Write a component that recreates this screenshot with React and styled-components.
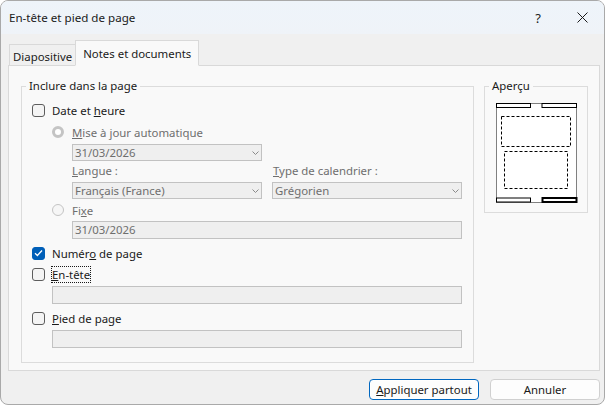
import styled, { createGlobalStyle } from 'styled-components'

const Global = createGlobalStyle`
  html, body {
    margin: 0;
    padding: 0;
    background: #ffffff;
    font-family: 'Noto Sans', 'Liberation Sans', sans-serif;
    font-size: 11.4px;
    color: #1a1a1a;
  }
`

const Window = styled.div`
  width: 605px;
  height: 405px;
  box-sizing: border-box;
  border: 1px solid #a9a9a9;
  border-radius: 8px;
  overflow: hidden;
  background: #f0f0f0;
  display: flex;
  flex-direction: column;
`

const TitleBar = styled.div`
  height: 33px;
  flex: none;
  display: flex;
  align-items: center;
  padding-left: 8px;
  background: linear-gradient(#eef4fa, #eff3f8);
`

const Title = styled.div`
  flex: 1;
  font-size: 11.6px;
  color: #1a1a1a;
`

const TitleButton = styled.div`
  width: 44px;
  height: 33px;
  display: flex;
  align-items: center;
  justify-content: center;
  color: #222;
  font-size: 13px;
`

const Body = styled.div`
  flex: 1;
  display: flex;
  flex-direction: column;
  padding: 6px 3px 0 7px;
`

const TabStrip = styled.div`
  display: flex;
  align-items: flex-end;
  height: 26px;
  position: relative;
  z-index: 1;
  margin-bottom: -1px;
`

const Tab = styled.div`
  box-sizing: border-box;
  position: relative;
  z-index: ${(p) => (p.active ? 1 : 0)};
  height: ${(p) => (p.active ? '26px' : '22px')};
  padding: 0 ${(p) => (p.active ? '7px' : '3px')};
  margin-left: ${(p) => (p.active ? '-1px' : '1px')};
  display: flex;
  align-items: center;
  border: 1px solid #d9d9d9;
  border-bottom: ${(p) => (p.active ? '1px solid #f9f9f9' : '1px solid #d9d9d9')};
  background: ${(p) => (p.active ? '#f9f9f9' : '#f0f0f0')};
  padding-top: ${(p) => (p.active ? '0' : '2px')};
  color: #1a1a1a;
`

const Panel = styled.div`
  height: 306px;
  width: 592px;
  box-sizing: border-box;
  border: 1px solid #d9d9d9;
  background: #f9f9f9;
  display: flex;
  gap: 10px;
  padding: 20px 11px 0 12px;
`

const Group = styled.div`
  position: relative;
  box-sizing: border-box;
  width: ${(p) => p.w}px;
  height: ${(p) => p.h}px;
  border: 1px solid #dcdcdc;
  padding: ${(p) => p.pad};
  display: flex;
  flex-direction: column;
`

const Legend = styled.span`
  position: absolute;
  top: -9px;
  left: 4px;
  padding: 0 3px;
  background: #f9f9f9;
  line-height: 16px;
  color: #1a1a1a;
`

const Row = styled.div`
  display: flex;
  align-items: center;
  height: 20px;
  margin-top: ${(p) => p.mt || 0}px;
  margin-left: ${(p) => p.ml || 0}px;
  gap: 7px;
`

const Box = styled.span`
  width: 13px;
  height: 13px;
  box-sizing: border-box;
  border-radius: 3px;
  border: 1px solid ${(p) => (p.checked ? '#005fb8' : '#5d5d5d')};
  background: ${(p) => (p.checked ? '#005fb8' : '#f4f4f4')};
  display: flex;
  align-items: center;
  justify-content: center;
  flex: none;
`

const Radio = styled.span`
  width: 12px;
  height: 12px;
  box-sizing: border-box;
  border-radius: 50%;
  flex: none;
  margin-right: 1px;
  border: ${(p) => (p.checked ? '3px solid #c4c4c4' : '1px solid #c4c4c4')};
  background: ${(p) => (p.checked ? '#ffffff' : '#f6f6f6')};
`

const Label = styled.span`
  color: ${(p) => (p.disabled ? '#6e6e6e' : '#1a1a1a')};
  line-height: 15px;
  outline: ${(p) => (p.focus ? '1px dotted #1a1a1a' : 'none')};
  outline-offset: 0;
`

const Field = styled.div`
  box-sizing: border-box;
  width: ${(p) => p.w}px;
  height: ${(p) => p.h || 18}px;
  margin-top: ${(p) => p.mt || 0}px;
  margin-left: ${(p) => p.ml || 0}px;
  border: 1px solid #c2c2c2;
  background: #efefef;
  color: #6e6e6e;
  display: flex;
  align-items: center;
  padding: 0 1px 0 2px;
`

const FieldText = styled.span`
  flex: 1;
  line-height: 14px;
`

const Columns = styled.div`
  display: flex;
  gap: 10px;
  margin-top: 3px;
  margin-left: 40px;
`

const Column = styled.div`
  display: flex;
  flex-direction: column;
  width: 190px;
`

const SmallLabel = styled.span`
  height: 14px;
  line-height: 14px;
  color: #6e6e6e;
  padding-left: ${(p) => p.pl || 0}px;
  margin-bottom: 4px;
`

const Footer = styled.div`
  display: flex;
  justify-content: flex-end;
  gap: 11px;
  padding: 8px 1px 0 0;
`

const Button = styled.div`
  box-sizing: border-box;
  width: 110px;
  height: 21px;
  border-radius: 4px;
  display: flex;
  align-items: center;
  justify-content: center;
  background: #fdfdfd;
  border: 1px solid ${(p) => (p.primary ? '#0067c0' : '#d0d0d0')};
  box-shadow: ${(p) => (p.primary ? 'inset 0 0 0 1px #ffffff' : 'none')};
  color: #1a1a1a;
`

const Chevron = () => (
  <svg width="9" height="6" viewBox="0 0 9 6">
    <path d="M1.5 1.5 L4.5 4.5 L7.5 1.5" fill="none" stroke="#8a8a8a" strokeWidth="1" />
  </svg>
)

const Check = () => (
  <svg width="9" height="8" viewBox="0 0 9 8">
    <path d="M1 4.2 L3.4 6.5 L8 1.5" fill="none" stroke="#ffffff" strokeWidth="1.3" />
  </svg>
)

const Select = ({ w, mt, ml, children }) => (
  <Field w={w} h={17} mt={mt} ml={ml}>
    <FieldText>{children}</FieldText>
    <Chevron />
  </Field>
)

const Preview = () => (
  <svg width="82" height="101" viewBox="0 0 82 101" style={{ display: 'block' }}>
    <rect x="0.5" y="0.5" width="80" height="99" fill="#ffffff" stroke="#808080" />
    <rect x="0.5" y="0.5" width="34" height="4" fill="#ffffff" stroke="#000" />
    <rect x="46" y="0.5" width="34.5" height="4" fill="#ffffff" stroke="#000" />
    <rect x="5.5" y="13.5" width="69" height="30" fill="none" stroke="#000" strokeDasharray="3 2" />
    <rect x="8.5" y="48.5" width="63" height="37" fill="none" stroke="#000" strokeDasharray="3 2" />
    <rect x="0.5" y="95" width="34" height="4" fill="#ffffff" stroke="#000" />
    <rect x="46.5" y="95" width="34" height="4" fill="#ffffff" stroke="#000" strokeWidth="2" />
  </svg>
)

const PreviewBox = styled.div`
  margin: 16px 0 0 11px;
`

export default function App() {
  return (
    <>
      <Global />
      <Window>
        <TitleBar>
          <Title>En-tête et pied de page</Title>
          <TitleButton>?</TitleButton>
          <TitleButton>
            <svg width="11" height="11" viewBox="0 0 11 11">
              <path d="M0.5 0.5 L10.5 10.5 M10.5 0.5 L0.5 10.5" stroke="#1a1a1a" strokeWidth="1" />
            </svg>
          </TitleButton>
        </TitleBar>
        <Body>
          <TabStrip>
            <Tab>Diapositive</Tab>
            <Tab active>Notes et documents</Tab>
          </TabStrip>
          <Panel>
            <Group w={453} h={277} pad="13px 10px 0 10px">
              <Legend>Inclure dans la page</Legend>
              <Row>
                <Box />
                <Label>Date et <u>h</u>eure</Label>
              </Row>
              <Row mt={2} ml={20}>
                <Radio checked />
                <Label disabled><u>M</u>ise à jour automatique</Label>
              </Row>
              <Select w={190} mt={2} ml={40}>31/03/2026</Select>
              <Columns>
                <Column>
                  <SmallLabel><u>L</u>angue :</SmallLabel>
                  <Select w={190}>Français (France)</Select>
                </Column>
                <Column>
                  <SmallLabel pl={1}><u>T</u>ype de calendrier :</SmallLabel>
                  <Select w={190}>Grégorien</Select>
                </Column>
              </Columns>
              <Row mt={1} ml={20}>
                <Radio />
                <Label disabled>Fi<u>x</u>e</Label>
              </Row>
              <Field w={390} mt={1} ml={40}>
                <FieldText>31/03/2026</FieldText>
              </Field>
              <Row mt={4}>
                <Box checked>
                  <Check />
                </Box>
                <Label>Numér<u>o</u> de page</Label>
              </Row>
              <Row mt={1}>
                <Box />
                <Label focus><u>E</u>n-tête</Label>
              </Row>
              <Field w={410} mt={2} ml={20} />
              <Row mt={4}>
                <Box />
                <Label><u>P</u>ied de page</Label>
              </Row>
              <Field w={410} mt={2} ml={20} />
            </Group>
            <Group w={104} h={127} pad="0">
              <Legend>Aperçu</Legend>
              <PreviewBox>
                <Preview />
              </PreviewBox>
            </Group>
          </Panel>
          <Footer>
            <Button primary>
              <span><u>A</u>ppliquer partout</span>
            </Button>
            <Button>Annuler</Button>
          </Footer>
        </Body>
      </Window>
    </>
  )
}
